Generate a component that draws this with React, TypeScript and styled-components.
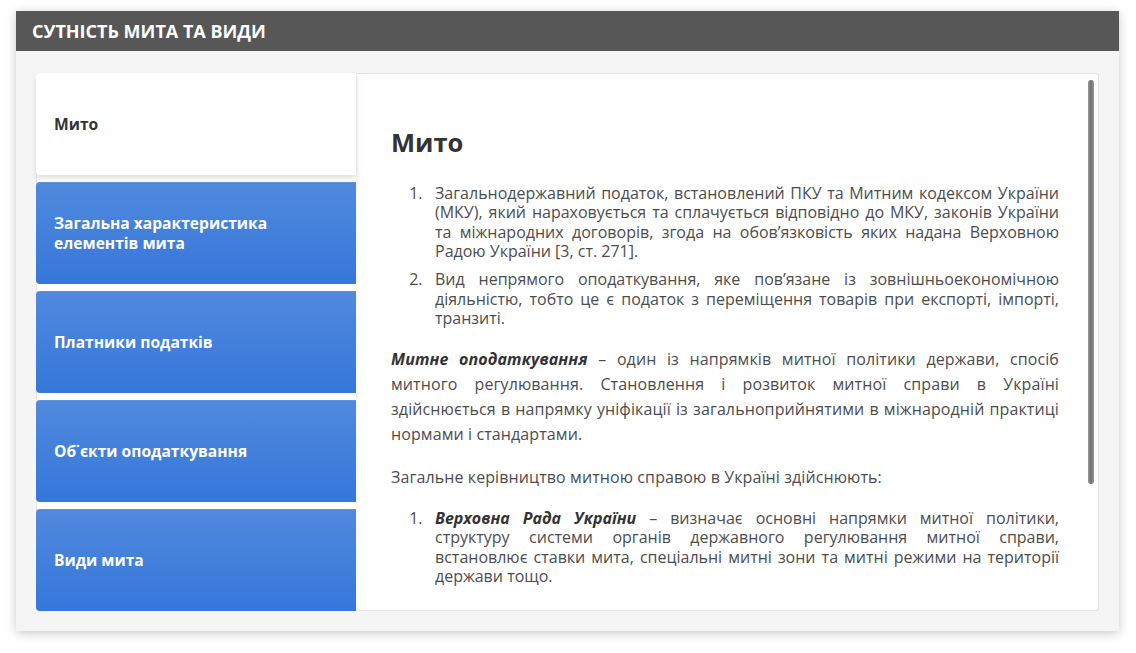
import React from "react";
import styled, { createGlobalStyle } from "styled-components";

const Global = createGlobalStyle`
  html, body { margin: 0; padding: 0; background: #ffffff; }
  body { font-family: "Open Sans", "Noto Sans", sans-serif; }
  * { box-sizing: border-box; }
`;

const Page = styled.div`
  padding: 11px 17px 0 16px;
  height: 653px;
`;

const Card = styled.div`
  width: 1103px;
  height: 620px;
  background: #f5f5f5;
  box-shadow: 0 2px 10px rgba(0, 0, 0, 0.22);
  display: flex;
  flex-direction: column;
`;

const Header = styled.div`
  height: 40px;
  flex: none;
  background: #575757;
  color: #ffffff;
  display: flex;
  align-items: center;
  padding-left: 16px;
  font-size: 18px;
  font-weight: 700;
  text-transform: uppercase;
`;

const Panel = styled.div`
  margin: 22px 20px 20px 20px;
  flex: 1;
  min-height: 0;
  background: #ffffff;
  border: 1px solid #e4e4e4;
  border-radius: 3px;
  display: flex;
`;

const Tabs = styled.div`
  width: 320px;
  flex: none;
  display: flex;
  flex-direction: column;
  gap: 7px;
  margin: -1px 0 -1px -1px;
`;

const Tab = styled.div<{ $active?: boolean }>`
  height: 102px;
  flex: none;
  display: flex;
  align-items: center;
  padding: 0 30px 0 18px;
  border-radius: 4px 0 0 4px;
  font-size: 15.6px;
  font-weight: 700;
  line-height: 20px;
  color: ${(p) => (p.$active ? "#333333" : "#ffffff")};
  background: ${(p) =>
    p.$active ? "#ffffff" : "linear-gradient(to bottom, #5189dd 0%, #3577da 100%)"};
  box-shadow: ${(p) =>
    p.$active ? "0 3px 5px rgba(0,0,0,0.13)" : "inset 0 1px 0 rgba(255,255,255,0.08)"};
  position: relative;
  z-index: ${(p) => (p.$active ? 1 : 0)};
`;

const ContentWrap = styled.div`
  flex: 1;
  min-width: 0;
  position: relative;
  box-shadow: inset 4px 0 6px -4px rgba(0, 0, 0, 0.08);
`;

const Content = styled.div`
  height: 100%;
  overflow: hidden;
  padding: 48px 39px 20px 35px;
  color: #4d4d4d;
  font-size: 16px;
`;

const ScrollThumb = styled.div`
  position: absolute;
  top: 6px;
  right: 4px;
  width: 6px;
  height: 404px;
  border-radius: 3px;
  background: linear-gradient(to right, #9a9a9a, #6f6f6f 50%, #9a9a9a);
`;

const Title = styled.h2`
  margin: 0 0 22px 0;
  font-size: 25.5px;
  line-height: 40px;
  font-weight: 700;
  color: #333333;
`;

const List = styled.ol`
  margin: 0;
  padding-left: 44px;
`;

const Item = styled.li`
  line-height: 19.4px;
  text-align: justify;
  margin-bottom: 8.6px;
  padding-left: 0;

  &::marker {
    content: counter(list-item) ".\\00a0\\00a0\\00a0";
  }
`;

const Para = styled.p`
  margin: 19px 0;
  line-height: 24.7px;
  text-align: justify;
  letter-spacing: 0.1px;
`;

const Term = styled.b`
  font-style: italic;
  color: #333333;
`;

const tabs = [
  "Мито",
  "Загальна характеристика елементів мита",
  "Платники податків",
  "Об˙єкти оподаткування",
  "Види мита",
];

export default function App() {
  return (
    <>
      <Global />
      <Page>
        <Card>
          <Header>Сутність мита та види</Header>
          <Panel>
            <Tabs>
              {tabs.map((t, i) => (
                <Tab key={t} $active={i === 0}>
                  {t}
                </Tab>
              ))}
            </Tabs>
            <ContentWrap>
              <Content>
                <Title>Мито</Title>
                <List>
                  <Item>
                    Загальнодержавний податок, встановлений ПКУ та Митним кодексом України (МКУ), який
                    нараховується та сплачується відповідно до МКУ, законів України та міжнародних
                    договорів, згода на обов’язковість яких надана Верховною Радою України [3, ст. 271].
                  </Item>
                  <Item>
                    Вид непрямого оподаткування, яке пов’язане із зовнішньоекономічною діяльністю, тобто
                    це є податок з переміщення товарів при експорті, імпорті, транзиті.
                  </Item>
                </List>
                <Para>
                  <Term>Митне оподаткування</Term> – один із напрямків митної політики держави, спосіб
                  митного регулювання. Становлення і розвиток митної справи в Україні здійснюється в
                  напрямку уніфікації із загальноприйнятими в міжнародній практиці нормами і стандартами.
                </Para>
                <Para>Загальне керівництво митною справою в Україні здійснюють:</Para>
                <List>
                  <Item>
                    <Term>Верховна Рада України</Term> – визначає основні напрямки митної політики,
                    структуру системи органів державного регулювання митної справи, встановлює ставки
                    мита, спеціальні митні зони та митні режими на території держави тощо.
                  </Item>
                </List>
              </Content>
              <ScrollThumb />
            </ContentWrap>
          </Panel>
        </Card>
      </Page>
    </>
  );
}
